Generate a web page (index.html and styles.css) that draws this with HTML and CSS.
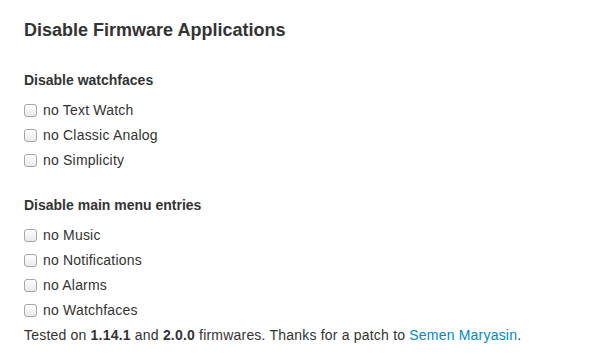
FILE: index.html
```html
<!DOCTYPE html>
<html lang="en">

<head>
  <meta charset="UTF-8">
  <title>Disable Firmware Applications</title>
  <link rel="stylesheet" href="styles.css">
</head>

<body>
  <h3 class="title">Disable Firmware Applications</h3>

  <div class="group">
    <h5 class="group-title">Disable watchfaces</h5>
    <label class="option"><input type="checkbox"> no Text Watch</label>
    <label class="option"><input type="checkbox"> no Classic Analog</label>
    <label class="option"><input type="checkbox"> no Simplicity</label>
  </div>

  <div class="group">
    <h5 class="group-title">Disable main menu entries</h5>
    <label class="option"><input type="checkbox"> no Music</label>
    <label class="option"><input type="checkbox"> no Notifications</label>
    <label class="option"><input type="checkbox"> no Alarms</label>
    <label class="option"><input type="checkbox"> no Watchfaces</label>
  </div>

  <p class="note">Tested on <b>1.14.1</b> and <b>2.0.0</b> firmwares. Thanks for a patch to <a href="#">Semen Maryasin</a>.</p>
</body>

</html>
```

FILE: styles.css
```css
body {
  font-family: "Liberation Sans", Arial, sans-serif;
  font-size: 14px;
  line-height: 20px;
  color: #333;
  margin: 0;
  padding: 0 24px;
  background: #fff;
}

.title {
  font-size: 18px;
  line-height: 20px;
  margin: 20px 0 30px;
}

.group {
  margin-bottom: 25px;
}

.group-title {
  font-size: 14px;
  line-height: 20px;
  margin: 0 0 10px;
}

.option {
  display: flex;
  align-items: center;
  height: 20px;
  margin-bottom: 5px;
  letter-spacing: 0.2px;
}

.option input {
  appearance: none;
  -webkit-appearance: none;
  width: 13px;
  height: 13px;
  margin: 0 6px 0 0;
  border: 1px solid #a6a6a6;
  border-radius: 3px;
  background: linear-gradient(#fff, #e9e9e9);
  box-shadow: inset 0 1px 1px rgba(255, 255, 255, 0.8);
}

.group:last-of-type {
  margin-bottom: 0;
}

.note {
  margin: 0;
  letter-spacing: 0.2px;
}

.note a {
  color: #0088cc;
  text-decoration: none;
}
```
